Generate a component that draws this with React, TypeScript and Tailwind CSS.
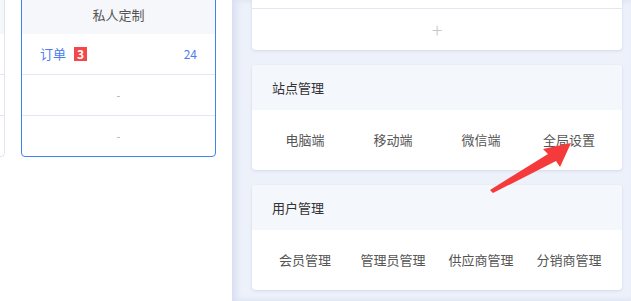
import React from "react";

const font = { fontFamily: '"Noto Sans CJK SC", "Noto Sans", sans-serif' };

const ArrowMark = () => (
    <svg className="absolute left-[486px] top-[128px]" width="100" height="66" viewBox="0 0 100 66">
        <path d="M4 62 L62 26 L57 21 L85 15 L74 39 L70 33 L7 65 Z" fill="#f43a3a" />
    </svg>
);

const SideCard = ({ title, rows, active }: { title: string; rows: React.ReactNode[]; active?: boolean }) => (
    <div
        className={
            "w-[195px] shrink-0 -mt-[5px] rounded-b-[4px] bg-white border " +
            (active ? "border-[#3d85ee]" : "border-[#dfe5f0]")
        }
    >
        <div className="h-[38px] bg-[#f5f7fa] flex items-center justify-center text-[13px] text-[#555]">
            {title}
        </div>
        {rows.map((r, i) => (
            <div
                key={i}
                className={
                    "flex items-center px-[18px] " + (i > 0 ? "h-[41px] border-t border-[#e3e8f0]" : "h-[40px]")
                }
            >
                {r}
            </div>
        ))}
    </div>
);

const Dash = () => <div className="w-full text-center text-[11px] text-[#aaa]">-</div>;

const Panel = ({ title, items }: { title: string; items: string[] }) => (
    <div className="rounded-[4px] bg-white shadow-[0_1px_3px_rgba(160,175,210,0.35)] overflow-hidden">
        <div className="h-[45px] bg-[#f4f7fb] flex items-center px-[20px] text-[13px] text-[#333]">{title}</div>
        <div className="h-[60px] grid grid-cols-4 px-[9px] items-center">
            {items.map((t) => (
                <div key={t} className="text-center text-[13px] text-[#555] pb-[1px]">
                    {t}
                </div>
            ))}
        </div>
    </div>
);

export default function App() {
    return (
        <div className="relative w-[631px] h-[301px] overflow-hidden flex bg-white" style={font}>
            <div className="w-[232px] shrink-0 overflow-hidden">
                <div className="flex gap-[16px] -ml-[190px]">
                    <SideCard title="" rows={[null, null, null]} />
                    <SideCard
                        active
                        title="私人定制"
                        rows={[
                            <div key="o" className="w-full flex items-center text-[13px] text-[#4a7cf5]">
                                <span>订单</span>
                                <span className="ml-[8px] h-[14px] px-[3px] bg-[#f44848] text-white text-[12px] leading-[14px] font-bold">
                                    3
                                </span>
                                <span className="ml-auto text-[12px]">24</span>
                            </div>,
                            <Dash key="d1" />,
                            <Dash key="d2" />,
                        ]}
                    />
                </div>
            </div>
            <div className="flex-1 bg-[#edf1fa] shadow-[inset_4px_0_6px_rgba(200,210,235,0.6)] pl-[20px] pr-[9px]">
                <div className="flex flex-col gap-[15px]">
                    <div className="-mt-[31px] rounded-[4px] bg-white shadow-[0_1px_3px_rgba(160,175,210,0.35)]">
                        <div className="h-[40px] border-b border-[#e3e8f0]" />
                        <div className="h-[41px] flex items-center justify-center text-[20px] font-light text-[#c8c8c8]">
                            +
                        </div>
                    </div>
                    <Panel title="站点管理" items={["电脑端", "移动端", "微信端", "全局设置"]} />
                    <Panel title="用户管理" items={["会员管理", "管理员管理", "供应商管理", "分销商管理"]} />
                </div>
            </div>
            <ArrowMark />
        </div>
    );
}
